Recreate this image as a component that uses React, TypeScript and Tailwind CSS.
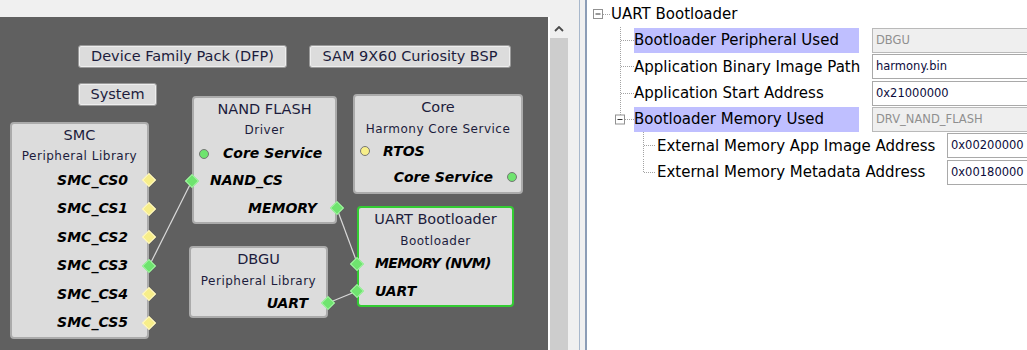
import React from 'react';

type PortColor = 'yellow' | 'green';

const Diamond: React.FC<{ color: PortColor; side: 'left' | 'right' }> = ({ color, side }) => (
  <span
    className={`absolute top-1/2 -translate-y-1/2 w-[14px] h-[14px] flex items-center justify-center ${
      side === 'left' ? 'left-[-9px]' : 'right-[-9px]'
    }`}
  >
    <span
      className={`block w-[10px] h-[10px] rotate-45 border ${
        color === 'green' ? 'bg-[#6fe46f] border-[#a6f3a6]' : 'bg-[#f7ee8a] border-[#fff8c8]'
      }`}
    />
  </span>
);

const Dot: React.FC<{ color: PortColor }> = ({ color }) => (
  <span
    className={`block shrink-0 w-[10px] h-[10px] rounded-full border border-[#767676] ${
      color === 'green' ? 'bg-[#6fe46f]' : 'bg-[#f7ee8a]'
    }`}
  />
);

const Node: React.FC<{ className: string; title: string; subtitle: string; children: React.ReactNode }> = ({
  className,
  title,
  subtitle,
  children
}) => (
  <div className={`absolute flex flex-col rounded-[4px] border-2 bg-[#dcdcdc] ${className}`}>
    <div className="h-[23px] flex items-center justify-center text-[14.5px] text-[#1c1c3c] whitespace-nowrap">{title}</div>
    <div className="h-[19px] flex items-center justify-center text-[12px] tracking-[0.5px] text-[#1c1c3c] whitespace-nowrap">
      {subtitle}
    </div>
    {children}
  </div>
);

const PillButton: React.FC<{ className: string; children: React.ReactNode }> = ({ className, children }) => (
  <div
    className={`absolute h-[23px] flex items-center justify-center rounded-[3px] border border-[#9a9a9a] bg-[#dcdcdc] shadow-[inset_0_0_0_1px_#eeeeee] text-[14.5px] text-[#1c1c3c] whitespace-nowrap ${className}`}
  >
    {children}
  </div>
);

const portText = 'relative flex items-center text-[14px] font-bold italic text-black whitespace-nowrap';

const Canvas: React.FC = () => {
  const smcRows = ['SMC_CS0', 'SMC_CS1', 'SMC_CS2', 'SMC_CS3', 'SMC_CS4', 'SMC_CS5'];
  return (
    <div className="relative flex-1 bg-[#606060] overflow-hidden">
      <svg className="absolute inset-0" width="548" height="333">
        <g stroke="#d9d9d9" strokeWidth="1.2">
          <line x1={149} y1={249.3} x2={191.7} y2={164.3} />
          <line x1={337} y1={191.8} x2={357.3} y2={246.5} />
          <line x1={328} y1={286} x2={357.3} y2={274} />
        </g>
      </svg>

      <PillButton className="left-[78px] top-[28px] w-[209px]">Device Family Pack (DFP)</PillButton>
      <PillButton className="left-[309px] top-[28px] w-[202px]">SAM 9X60 Curiosity BSP</PillButton>
      <PillButton className="left-[78px] top-[66px] w-[79px]">System</PillButton>

      <Node className="left-[10px] top-[105px] w-[139px] h-[217px] border-[#ababab]" title="SMC" subtitle="Peripheral Library">
        {smcRows.map((r, i) => (
          <div key={r} className={`${portText} justify-end h-[28.67px] pr-[19px]`}>
            {r}
            <Diamond side="right" color={i === 3 ? 'green' : 'yellow'} />
          </div>
        ))}
      </Node>

      <Node className="left-[192px] top-[79px] w-[145px] h-[128px] border-[#ababab]" title="NAND FLASH" subtitle="Driver">
        <div className={`${portText} h-[27.5px] pl-[5px] gap-[14px]`}>
          <Dot color="green" />
          Core Service
        </div>
        <div className={`${portText} h-[27.5px] pl-[16px]`}>
          NAND_CS
          <Diamond side="left" color="green" />
        </div>
        <div className={`${portText} justify-end h-[27.5px] pr-[18px]`}>
          MEMORY
          <Diamond side="right" color="green" />
        </div>
      </Node>

      <Node className="left-[353px] top-[77px] w-[170px] h-[100px] border-[#ababab]" title="Core" subtitle="Harmony Core Service">
        <div className={`${portText} h-[26px] pl-[5px] gap-[13px]`}>
          <Dot color="yellow" />
          RTOS
        </div>
        <div className={`${portText} justify-end h-[26px] pr-[4px] gap-[14px]`}>
          Core Service
          <Dot color="green" />
        </div>
      </Node>

      <Node className="left-[189px] top-[229px] w-[139px] h-[72px] border-[#ababab]" title="DBGU" subtitle="Peripheral Library">
        <div className={`${portText} justify-end h-[26px] pr-[18px]`}>
          UART
          <Diamond side="right" color="green" />
        </div>
      </Node>

      <Node className="left-[357px] top-[189px] w-[157px] h-[101px] border-[#33cc33]" title="UART Bootloader" subtitle="Bootloader">
        <div className={`${portText} h-[27px] pl-[16px] tracking-[-0.6px]`}>
          MEMORY (NVM)
          <Diamond side="left" color="green" />
        </div>
        <div className={`${portText} h-[28px] pl-[16px]`}>
          UART
          <Diamond side="left" color="green" />
        </div>
      </Node>
    </div>
  );
};

const ExpandBox: React.FC<{ x: number; y: number }> = ({ x, y }) => (
  <g>
    <rect x={x + 0.5} y={y + 0.5} width={9} height={9} fill="white" stroke="#919191" />
    <line x1={x + 2.5} y1={y + 5} x2={x + 7.5} y2={y + 5} stroke="#333" />
  </g>
);

const dots = { stroke: '#a3a3a3', strokeDasharray: '1 1', shapeRendering: 'crispEdges' as const };

type Row = {
  label: string;
  value: string;
  level: 1 | 2;
  highlight?: boolean;
  disabled?: boolean;
  last?: boolean;
  expand?: boolean;
};

const rows: Row[] = [
  { label: 'Bootloader Peripheral Used', value: 'DBGU', level: 1, highlight: true, disabled: true },
  { label: 'Application Binary Image Path', value: 'harmony.bin', level: 1 },
  { label: 'Application Start Address', value: '0x21000000', level: 1 },
  { label: 'Bootloader Memory Used', value: 'DRV_NAND_FLASH', level: 1, highlight: true, disabled: true, expand: true },
  { label: 'External Memory App Image Address', value: '0x00200000', level: 2 },
  { label: 'External Memory Metadata Address', value: '0x00180000', level: 2, last: true }
];

const TreeRow: React.FC<{ row: Row }> = ({ row }) => {
  const h = 26.33;
  const c = 13.5;
  return (
    <div className="flex items-center h-[26.33px] pl-[20px]">
      {row.level === 1 ? (
        <svg width="27" height={h} className="shrink-0">
          {row.expand ? (
            <>
              <line x1={13.5} y1={0} x2={13.5} y2={c - 5} {...dots} />
              <line x1={18} y1={c} x2={27} y2={c} {...dots} />
              <ExpandBox x={8} y={c - 5} />
            </>
          ) : (
            <>
              <line x1={13.5} y1={0} x2={13.5} y2={h} {...dots} />
              <line x1={14} y1={c} x2={27} y2={c} {...dots} />
            </>
          )}
        </svg>
      ) : (
        <svg width="50" height={h} className="shrink-0">
          <line x1={36.5} y1={0} x2={36.5} y2={row.last ? c : h} {...dots} />
          <line x1={37} y1={c} x2={49} y2={c} {...dots} />
        </svg>
      )}
      <div
        className={`h-[25px] mt-[1px] flex items-center shrink-0 text-[15px] text-black whitespace-nowrap ${
          row.level === 1 ? 'w-[225px]' : 'w-[290px]'
        } ${row.highlight ? 'bg-[#bfbfff]' : ''}`}
      >
        {row.label}
      </div>
      <div
        className={`h-[25px] mt-[1px] w-[200px] shrink-0 flex items-center pl-[3px] border text-[11.5px] ${
          row.level === 1 ? 'ml-[13px]' : 'ml-0'
        } ${
          row.disabled
            ? 'bg-[#efefef] border-[#b9b9b9] text-[#8f8f8f]'
            : 'bg-white border-[#a9a9a9] text-[#0c0c3c]'
        }`}
      >
        {row.value}
      </div>
    </div>
  );
};

const PropertyTree: React.FC = () => (
  <div className="flex-1 bg-white overflow-hidden pt-[1px]">
    <div className="flex items-center h-[26px]">
      <svg width="24" height="26" className="shrink-0">
        <line x1={16} y1={13} x2={23} y2={13} {...dots} />
        <ExpandBox x={6} y={8} />
      </svg>
      <span className="text-[15px] text-black whitespace-nowrap">UART Bootloader</span>
    </div>
    {rows.map(r => (
      <TreeRow key={r.label} row={r} />
    ))}
  </div>
);

export default function App() {
  return (
    <div className="flex w-[1027px] h-[350px] overflow-hidden bg-[#f0f0f0] font-['DejaVu_Sans',sans-serif]">
      <div className="flex flex-col w-[548px] shrink-0">
        <div className="h-[17px] shrink-0" />
        <Canvas />
      </div>
      <div className="flex flex-col w-[2px] shrink-0">
        <div className="h-[17px] shrink-0" />
        <div className="flex-1 bg-white" />
      </div>
      <div className="flex flex-col w-[18px] shrink-0">
        <div className="h-[38px] shrink-0 flex items-end justify-center pb-[6px]">
          <svg width="10" height="6">
            <polyline points="1,5 5,1 9,5" fill="none" stroke="#4a4a4a" strokeWidth="1.8" />
          </svg>
        </div>
        <div className="flex-1 bg-[#cdcdcd]" />
      </div>
      <div className="w-[11px] shrink-0" />
      <div className="w-px shrink-0 bg-[#a8b8cc]" />
      <div className="w-[5px] shrink-0" />
      <div className="w-[2px] shrink-0 bg-[#8c9db6]" />
      <PropertyTree />
    </div>
  );
}
